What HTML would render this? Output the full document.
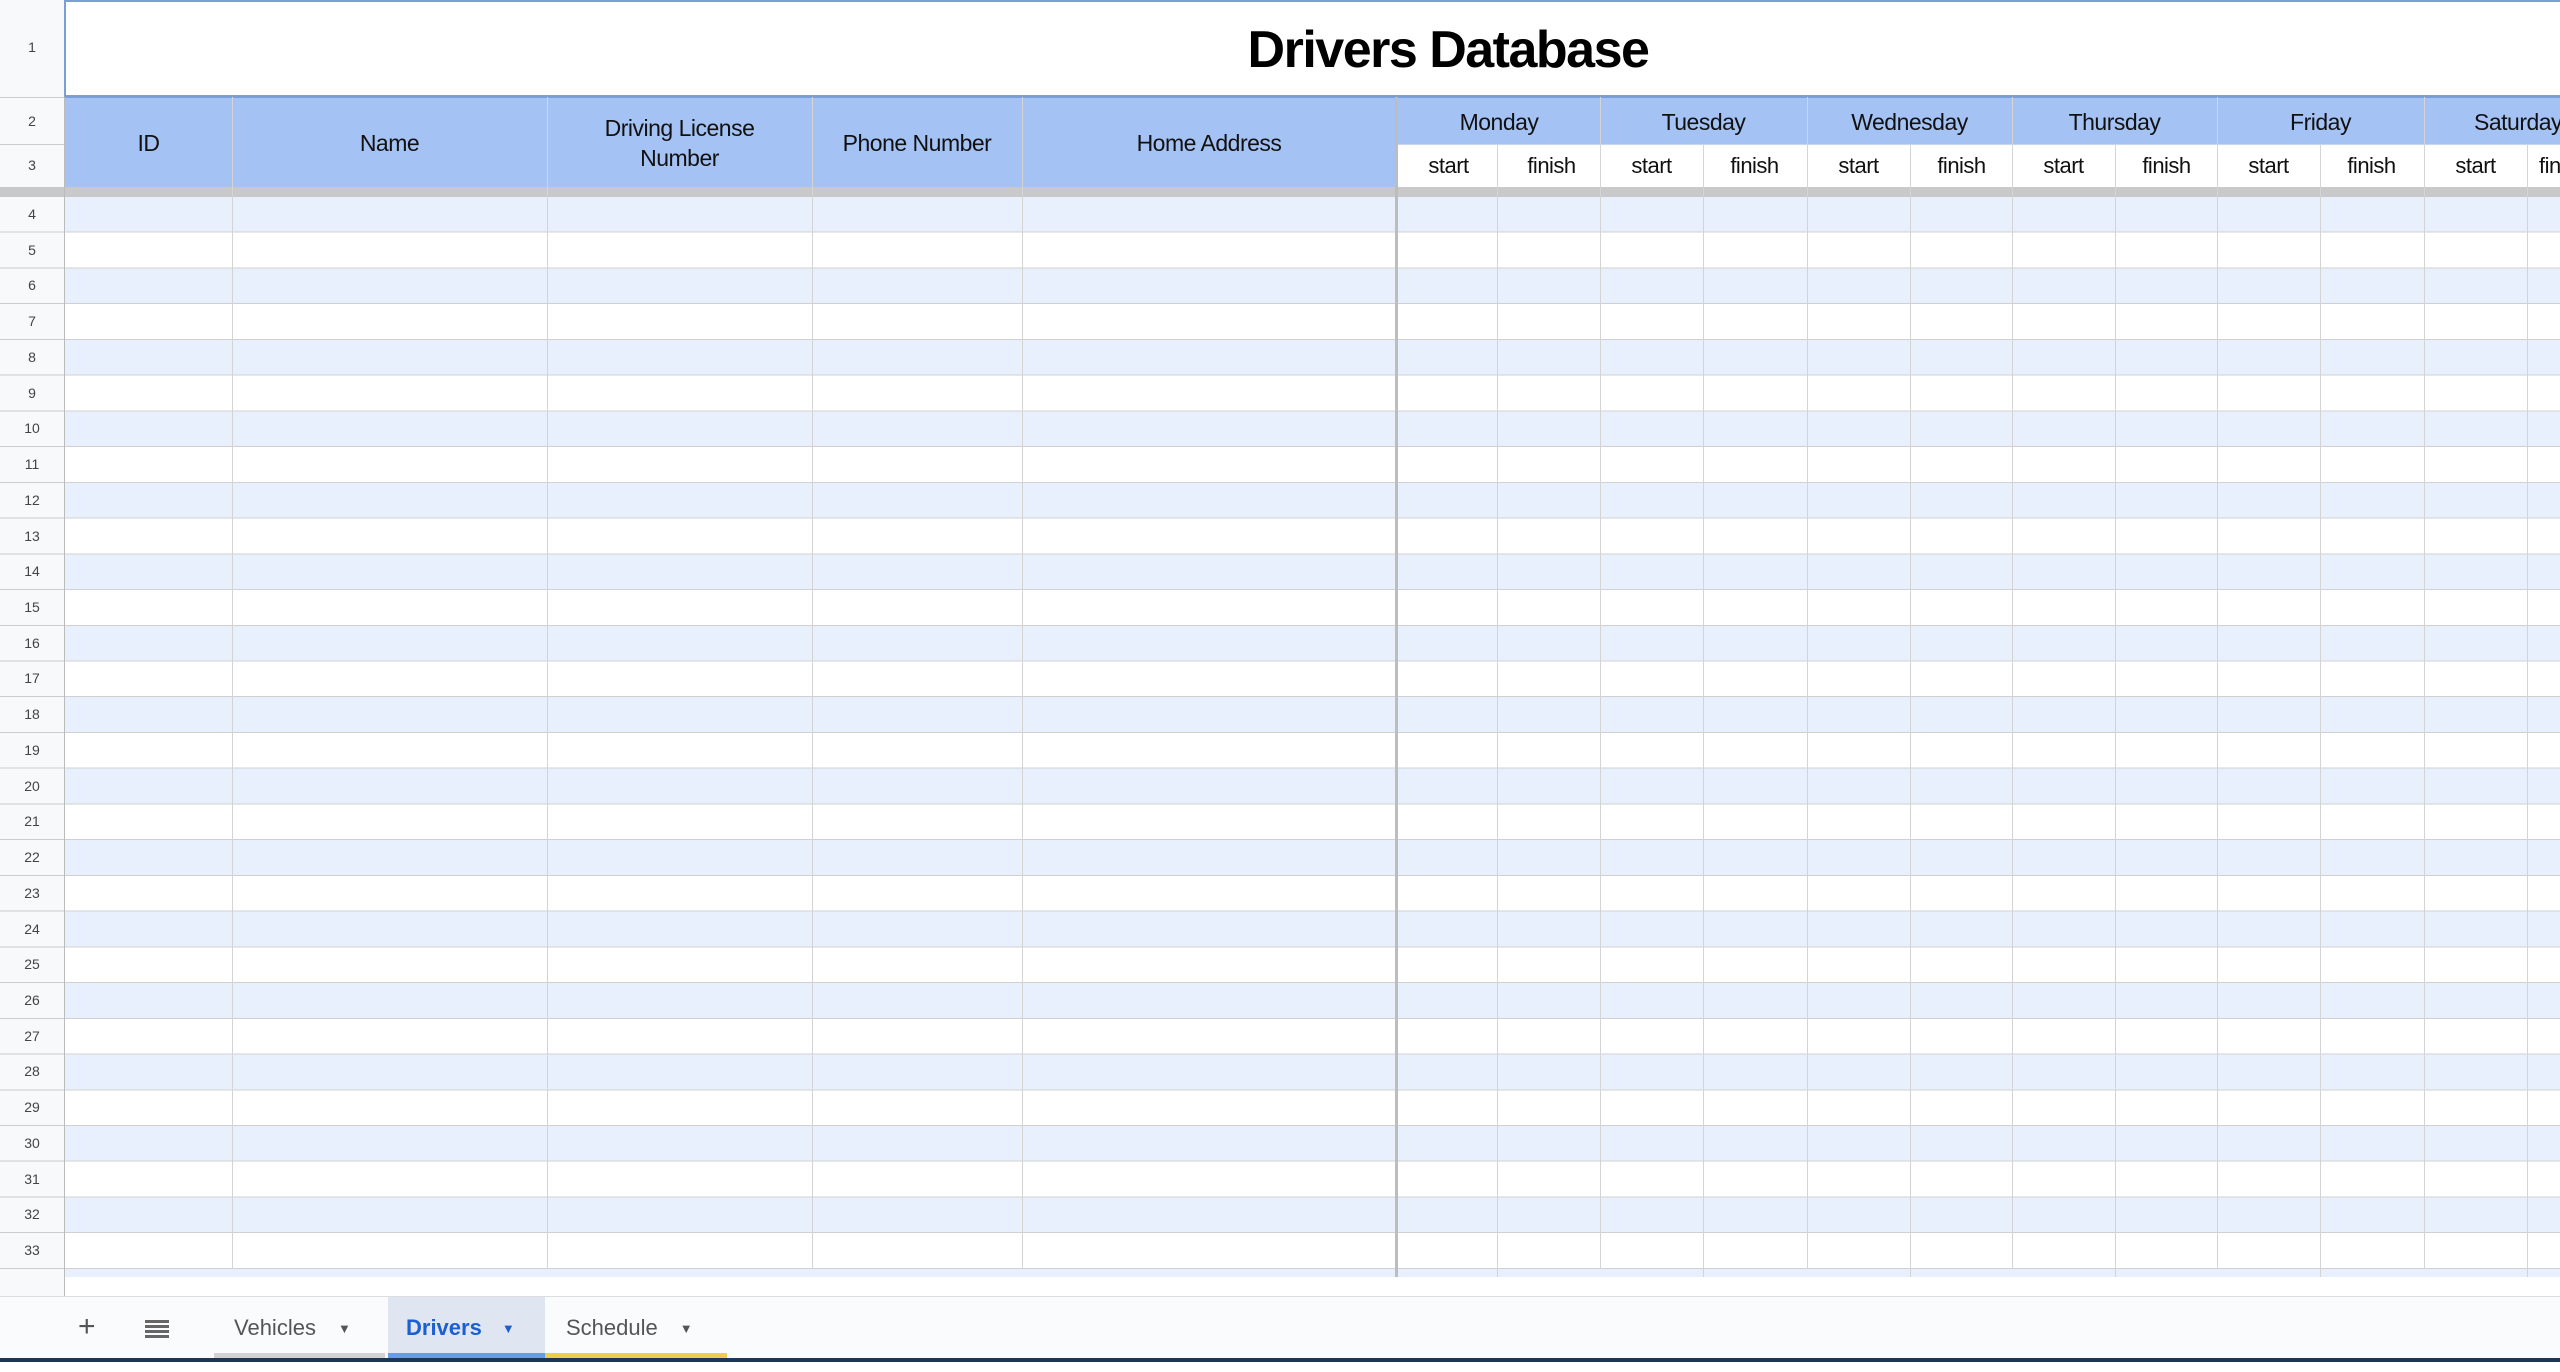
<!DOCTYPE html>
<html><head><meta charset="utf-8"><style>
*{margin:0;padding:0;box-sizing:border-box}
body{width:2560px;height:1372px;overflow:hidden;background:#fff;font-family:"Liberation Sans",sans-serif;position:relative}
.a{position:absolute}
.rn{position:absolute;left:0;width:64px;text-align:center;font-size:14px;color:#444;line-height:35px}
.vl{position:absolute;top:97px;width:1px;height:1172px;background:#d4d4d4}
.hd{position:absolute;display:flex;align-items:center;justify-content:center;text-align:center;font-size:23px;color:#111;letter-spacing:-0.5px;line-height:30px}
.sub{position:absolute;top:145px;height:42px;width:103px;display:flex;align-items:center;justify-content:center;font-size:22px;color:#111;letter-spacing:-0.5px}
.tab{position:absolute;top:1297px;height:62px;display:flex;align-items:center;font-size:23px;color:#555}
</style></head><body>
<div class="a" style="left:0;top:0;width:64px;height:1297px;background:#f8f9fa"></div>
<div class="a" style="left:64px;top:0;width:2px;height:97px;background:#7a9fd6"></div>
<div class="a" style="left:64px;top:0;width:2496px;height:2px;background:#7a9fd6"></div>
<div class="a" style="left:0;top:97px;width:64px;height:1px;background:#ccc"></div>
<div class="a" style="left:0;top:144px;width:64px;height:1px;background:#ccc"></div>
<div class="rn" style="top:30px">1</div>
<div class="rn" style="top:104px">2</div>
<div class="rn" style="top:148px">3</div>
<div class="a" style="left:66px;top:2px;width:2494px;height:95px;display:flex;align-items:center;justify-content:center;font-size:52px;font-weight:bold;color:#000;letter-spacing:-1.5px;padding-left:270px">Drivers Database</div>
<div class="a" style="left:64px;top:95px;width:2496px;height:3px;background:#7a9fd6"></div>
<div class="a" style="left:65px;top:98px;width:2495px;height:91px;background:#a4c2f4"></div>
<div class="a" style="left:1397px;top:145px;width:1163px;height:42px;background:#fff"></div>
<div class="a" style="left:0;top:187px;width:2560px;height:10px;background:#c9c9c9"></div>
<div class="a" style="left:65px;top:197px;width:2495px;height:1072px;background:repeating-linear-gradient(to bottom,#e8f0fe 0,#e8f0fe 34.73px,#d0d0d0 34.73px,#d0d0d0 35.73px,#fff 35.73px,#fff 70.46px,#d0d0d0 70.46px,#d0d0d0 71.46px)"></div>
<div class="a" style="left:0;top:197px;width:64px;height:1072px;background:repeating-linear-gradient(to bottom,transparent 0,transparent 34.73px,#ccc 34.73px,#ccc 35.73px)"></div>
<div class="a" style="left:65px;top:1269px;width:2495px;height:8px;background:#e8f0fe"></div>
<div class="a" style="left:64px;top:97px;width:1px;height:1200px;background:#bbb"></div>
<div class="vl" style="left:232px"></div><div class="vl" style="left:547px"></div>
<div class="vl" style="left:812px"></div><div class="vl" style="left:1022px"></div>
<div class="a" style="left:1395px;top:97px;width:3px;height:1180px;background:#bdbdbd"></div>
<div class="vl" style="left:1497px;top:145px;height:1132px"></div><div class="vl" style="left:1600px"></div>
<div class="vl" style="left:1703px;top:145px;height:1132px"></div><div class="vl" style="left:1807px"></div>
<div class="vl" style="left:1910px;top:145px;height:1132px"></div><div class="vl" style="left:2012px"></div>
<div class="vl" style="left:2115px;top:145px;height:1132px"></div><div class="vl" style="left:2217px"></div>
<div class="vl" style="left:2320px;top:145px;height:1132px"></div><div class="vl" style="left:2424px"></div>
<div class="vl" style="left:2527px;top:145px;height:1132px"></div>
<div class="a" style="left:1398px;top:144px;width:1162px;height:1px;background:#c8d6ee"></div>
<div class="hd" style="left:65px;top:98px;width:167px;height:89px">ID</div>
<div class="hd" style="left:232px;top:98px;width:315px;height:89px">Name</div>
<div class="hd" style="left:547px;top:98px;width:265px;height:89px">Driving License<br>Number</div>
<div class="hd" style="left:812px;top:98px;width:210px;height:89px">Phone Number</div>
<div class="hd" style="left:1022px;top:98px;width:374px;height:89px">Home Address</div>
<div class="hd" style="left:1398px;top:98px;width:202px;height:47px">Monday</div>
<div class="hd" style="left:1600px;top:98px;width:207px;height:47px">Tuesday</div>
<div class="hd" style="left:1807px;top:98px;width:205px;height:47px">Wednesday</div>
<div class="hd" style="left:2012px;top:98px;width:205px;height:47px">Thursday</div>
<div class="hd" style="left:2217px;top:98px;width:207px;height:47px">Friday</div>
<div class="hd" style="left:2424px;top:98px;width:205px;height:47px;justify-content:flex-start;padding-left:50px">Saturday</div>
<div class="sub" style="left:1397px">start</div><div class="sub" style="left:1500px">finish</div>
<div class="sub" style="left:1600px">start</div><div class="sub" style="left:1703px">finish</div>
<div class="sub" style="left:1807px">start</div><div class="sub" style="left:1910px">finish</div>
<div class="sub" style="left:2012px">start</div><div class="sub" style="left:2115px">finish</div>
<div class="sub" style="left:2217px">start</div><div class="sub" style="left:2320px">finish</div>
<div class="sub" style="left:2424px">start</div><div class="sub" style="left:2527px;justify-content:flex-start;padding-left:12px">finish</div>
<div class="rn" style="top:197px">4</div><div class="rn" style="top:233px">5</div><div class="rn" style="top:268px">6</div><div class="rn" style="top:304px">7</div><div class="rn" style="top:340px">8</div><div class="rn" style="top:376px">9</div><div class="rn" style="top:411px">10</div><div class="rn" style="top:447px">11</div><div class="rn" style="top:483px">12</div><div class="rn" style="top:519px">13</div><div class="rn" style="top:554px">14</div><div class="rn" style="top:590px">15</div><div class="rn" style="top:626px">16</div><div class="rn" style="top:661px">17</div><div class="rn" style="top:697px">18</div><div class="rn" style="top:733px">19</div><div class="rn" style="top:769px">20</div><div class="rn" style="top:804px">21</div><div class="rn" style="top:840px">22</div><div class="rn" style="top:876px">23</div><div class="rn" style="top:912px">24</div><div class="rn" style="top:947px">25</div><div class="rn" style="top:983px">26</div><div class="rn" style="top:1019px">27</div><div class="rn" style="top:1054px">28</div><div class="rn" style="top:1090px">29</div><div class="rn" style="top:1126px">30</div><div class="rn" style="top:1162px">31</div><div class="rn" style="top:1197px">32</div><div class="rn" style="top:1233px">33</div>
<div class="a" style="left:65px;top:1277px;width:2495px;height:20px;background:#fff"></div>
<div class="a" style="left:0;top:1296px;width:2560px;height:1px;background:#ddd"></div>
<div class="a" style="left:0;top:1297px;width:2560px;height:62px;background:#f9fbfd"></div>
<div class="a" style="left:78px;top:1310px;font-size:30px;color:#555">+</div>
<div class="a" style="left:145px;top:1320px;width:24px;height:18px;background:repeating-linear-gradient(#666 0,#666 3px,transparent 3px,transparent 5px)"></div>
<div class="tab" style="left:214px;width:171px;padding-left:20px;font-size:22px">Vehicles<span style="font-size:13px;margin-left:22px">▼</span></div>
<div class="a" style="left:214px;top:1353px;width:171px;height:5px;background:#d2d2d2"></div>
<div class="tab" style="left:388px;width:157px;padding-left:18px;background:#dfe6f1;color:#1b5fd1;font-weight:bold;font-size:22px">Drivers<span style="font-size:13px;margin-left:20px">▼</span></div>
<div class="a" style="left:388px;top:1353px;width:157px;height:5px;background:#6a9be6"></div>
<div class="tab" style="left:545px;width:182px;padding-left:21px;font-size:22px">Schedule<span style="font-size:13px;margin-left:22px">▼</span></div>
<div class="a" style="left:545px;top:1353px;width:182px;height:5px;background:#f1cb4b"></div>
<div class="a" style="left:0;top:1358px;width:2560px;height:4px;background:#1e3656"></div>
</body></html>
